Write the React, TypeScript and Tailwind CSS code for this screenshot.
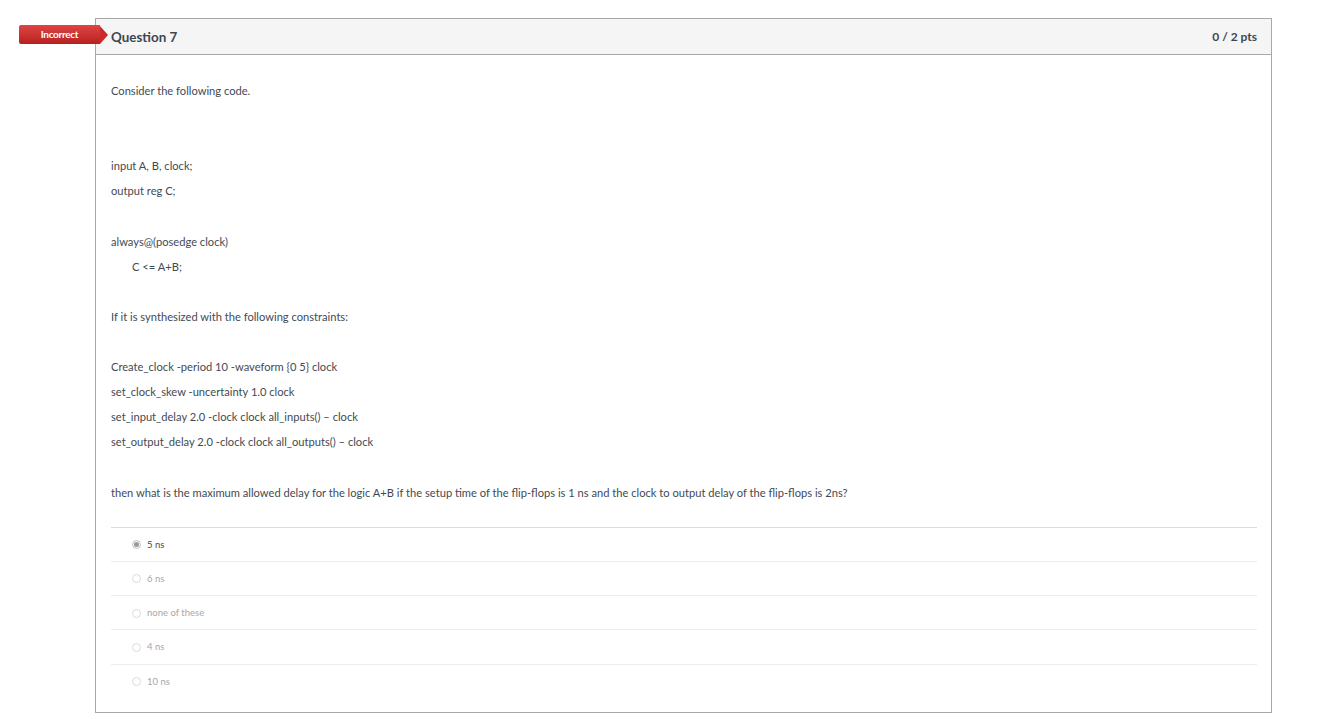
import React from 'react';

const paragraphs: { text: string; indent?: boolean }[] = [
  { text: 'Consider the following code.' },
  { text: '' },
  { text: '' },
  { text: 'input A, B, clock;' },
  { text: 'output reg C;' },
  { text: '' },
  { text: 'always@(posedge clock)' },
  { text: 'C <= A+B;', indent: true },
  { text: '' },
  { text: 'If it is synthesized with the following constraints:' },
  { text: '' },
  { text: 'Create_clock -period 10 -waveform {0 5} clock' },
  { text: 'set_clock_skew -uncertainty 1.0 clock' },
  { text: 'set_input_delay 2.0 -clock clock all_inputs() \u2013 clock' },
  { text: 'set_output_delay 2.0 -clock clock all_outputs() \u2013 clock' },
  { text: '' },
  {
    text: 'then what is the maximum allowed delay for the logic A+B if the setup time of the flip-flops is 1 ns and the clock to output delay of the flip-flops is 2ns?',
  },
];

const answers = [
  { label: '5 ns', selected: true },
  { label: '6 ns' },
  { label: 'none of these' },
  { label: '4 ns' },
  { label: '10 ns' },
];

const Radio: React.FC<{ selected?: boolean }> = ({ selected }) => (
  <span
    className={`w-[9px] h-[9px] rounded-full border flex items-center justify-center shrink-0 ${
      selected ? 'border-[#c4c4c4] bg-[#f5f5f5]' : 'border-[#dadada] bg-white'
    }`}
  >
    {selected && <span className="w-[5px] h-[5px] rounded-full bg-[#9a9a9a]" />}
  </span>
);

const App: React.FC = () => {
  return (
    <div
      className="min-h-[724px] bg-white pl-[95px] pt-[18px] text-[#3f4a53]"
      style={{ fontFamily: 'Lato, "Open Sans", sans-serif' }}
    >
      <div className="relative w-[1177px] border border-[#a8a8a8]">
        <div className="absolute left-[-77px] top-[6px] flex h-[19px] items-center">
          <div className="flex h-[19px] w-[81px] items-center justify-center rounded-l-[2px] bg-gradient-to-b from-[#e04444] to-[#b81f1f] text-[10px] font-bold tracking-[-0.3px] text-white">
            Incorrect
          </div>
          <div className="h-0 w-0 border-y-[9.5px] border-l-[8px] border-y-transparent border-l-[#c92a2a]" />
        </div>

        <div className="flex h-[36px] items-center justify-between border-b border-[#a8a8a8] bg-[#f5f5f5] pl-[15px] pr-[14px]">
          <span className="pt-[1px] text-[13.4px] font-bold text-[#3d4750]">Question 7</span>
          <span className="text-[12px] font-bold text-[#3d4750]">0 / 2 pts</span>
        </div>

        <div className="px-[15px] pt-[23px]">
          {paragraphs.map((p, i) => (
            <p
              key={i}
              className={`h-[25.1px] text-[11.15px] leading-[25.1px] ${p.indent ? 'pl-[21px]' : ''}`}
            >
              {p.text}
            </p>
          ))}

          <div className="mt-[22px] mr-[-1px]">
            {answers.map((a, i) => (
              <div
                key={a.label}
                className={`flex h-[34.25px] items-center gap-[6px] border-t pl-[21px] pt-[1px] ${
                  i === 0 ? 'border-[#dcdcdc]' : 'border-[#ececec]'
                }`}
              >
                <Radio selected={a.selected} />
                <span
                  className={`text-[9.5px] ${a.selected ? 'text-[#3f4a53]' : 'text-[#a7a7a7]'}`}
                >
                  {a.label}
                </span>
              </div>
            ))}
          </div>
          <div className="h-[14px]" />
        </div>
      </div>
    </div>
  );
};

export default App;
